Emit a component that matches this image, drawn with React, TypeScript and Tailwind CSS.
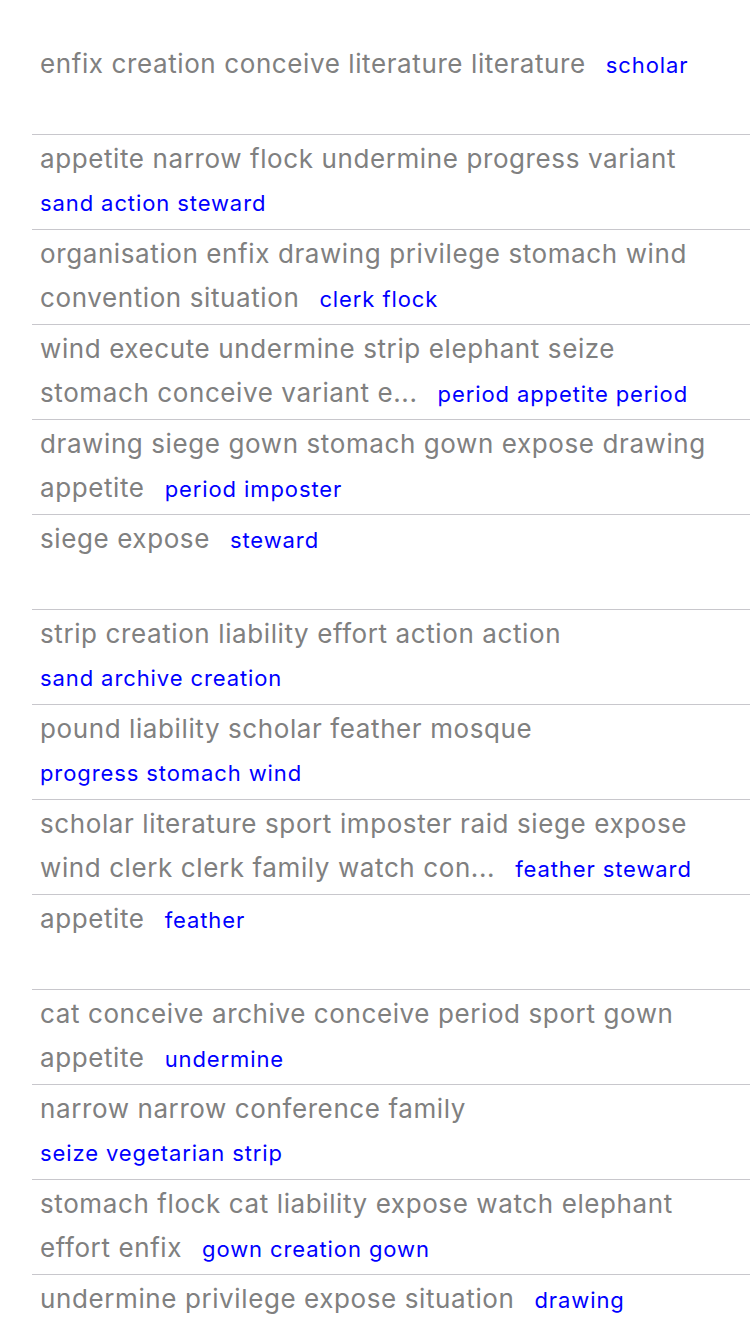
type Line = { gray?: string; blue?: string };

const rows: Line[][] = [
  [{ gray: 'enfix creation conceive literature literature', blue: 'scholar' }],
  [{ gray: 'appetite narrow flock undermine progress variant' }, { blue: 'sand action steward' }],
  [{ gray: 'organisation enfix drawing privilege stomach wind' }, { gray: 'convention situation', blue: 'clerk flock' }],
  [{ gray: 'wind execute undermine strip elephant seize' }, { gray: 'stomach conceive variant e...', blue: 'period appetite period' }],
  [{ gray: 'drawing siege gown stomach gown expose drawing' }, { gray: 'appetite', blue: 'period imposter' }],
  [{ gray: 'siege expose', blue: 'steward' }],
  [{ gray: 'strip creation liability effort action action' }, { blue: 'sand archive creation' }],
  [{ gray: 'pound liability scholar feather mosque' }, { blue: 'progress stomach wind' }],
  [{ gray: 'scholar literature sport imposter raid siege expose' }, { gray: 'wind clerk clerk family watch con...', blue: 'feather steward' }],
  [{ gray: 'appetite', blue: 'feather' }],
  [{ gray: 'cat conceive archive conceive period sport gown' }, { gray: 'appetite', blue: 'undermine' }],
  [{ gray: 'narrow narrow conference family' }, { blue: 'seize vegetarian strip' }],
  [{ gray: 'stomach flock cat liability expose watch elephant' }, { gray: 'effort enfix', blue: 'gown creation gown' }],
  [{ gray: 'undermine privilege expose situation', blue: 'drawing' }],
];

const Row = ({ lines }: { lines: Line[] }) => (
  <div className="h-[95px] pt-[2px] pl-[8px] border-b border-[#c8c7cc]">
    {lines.map((line, i) => (
      <div key={i} className="flex items-baseline h-[44px] leading-[44px] whitespace-nowrap">
        {line.gray && <span className="text-[26px] tracking-[0.6px] text-[#808080]">{line.gray}</span>}
        {line.blue && (
          <span className={`text-[22px] tracking-[0.9px] text-[#0000ff] ${line.gray ? 'ml-[20px]' : ''}`}>
            {line.blue}
          </span>
        )}
      </div>
    ))}
  </div>
);

export default function App() {
  return (
    <div className="w-[750px] h-[1334px] overflow-hidden bg-white pt-[40px] font-['Inter',sans-serif]">
      <div className="ml-[32px] flex flex-col">
        {rows.map((lines, i) => (
          <Row key={i} lines={lines} />
        ))}
      </div>
    </div>
  );
}
